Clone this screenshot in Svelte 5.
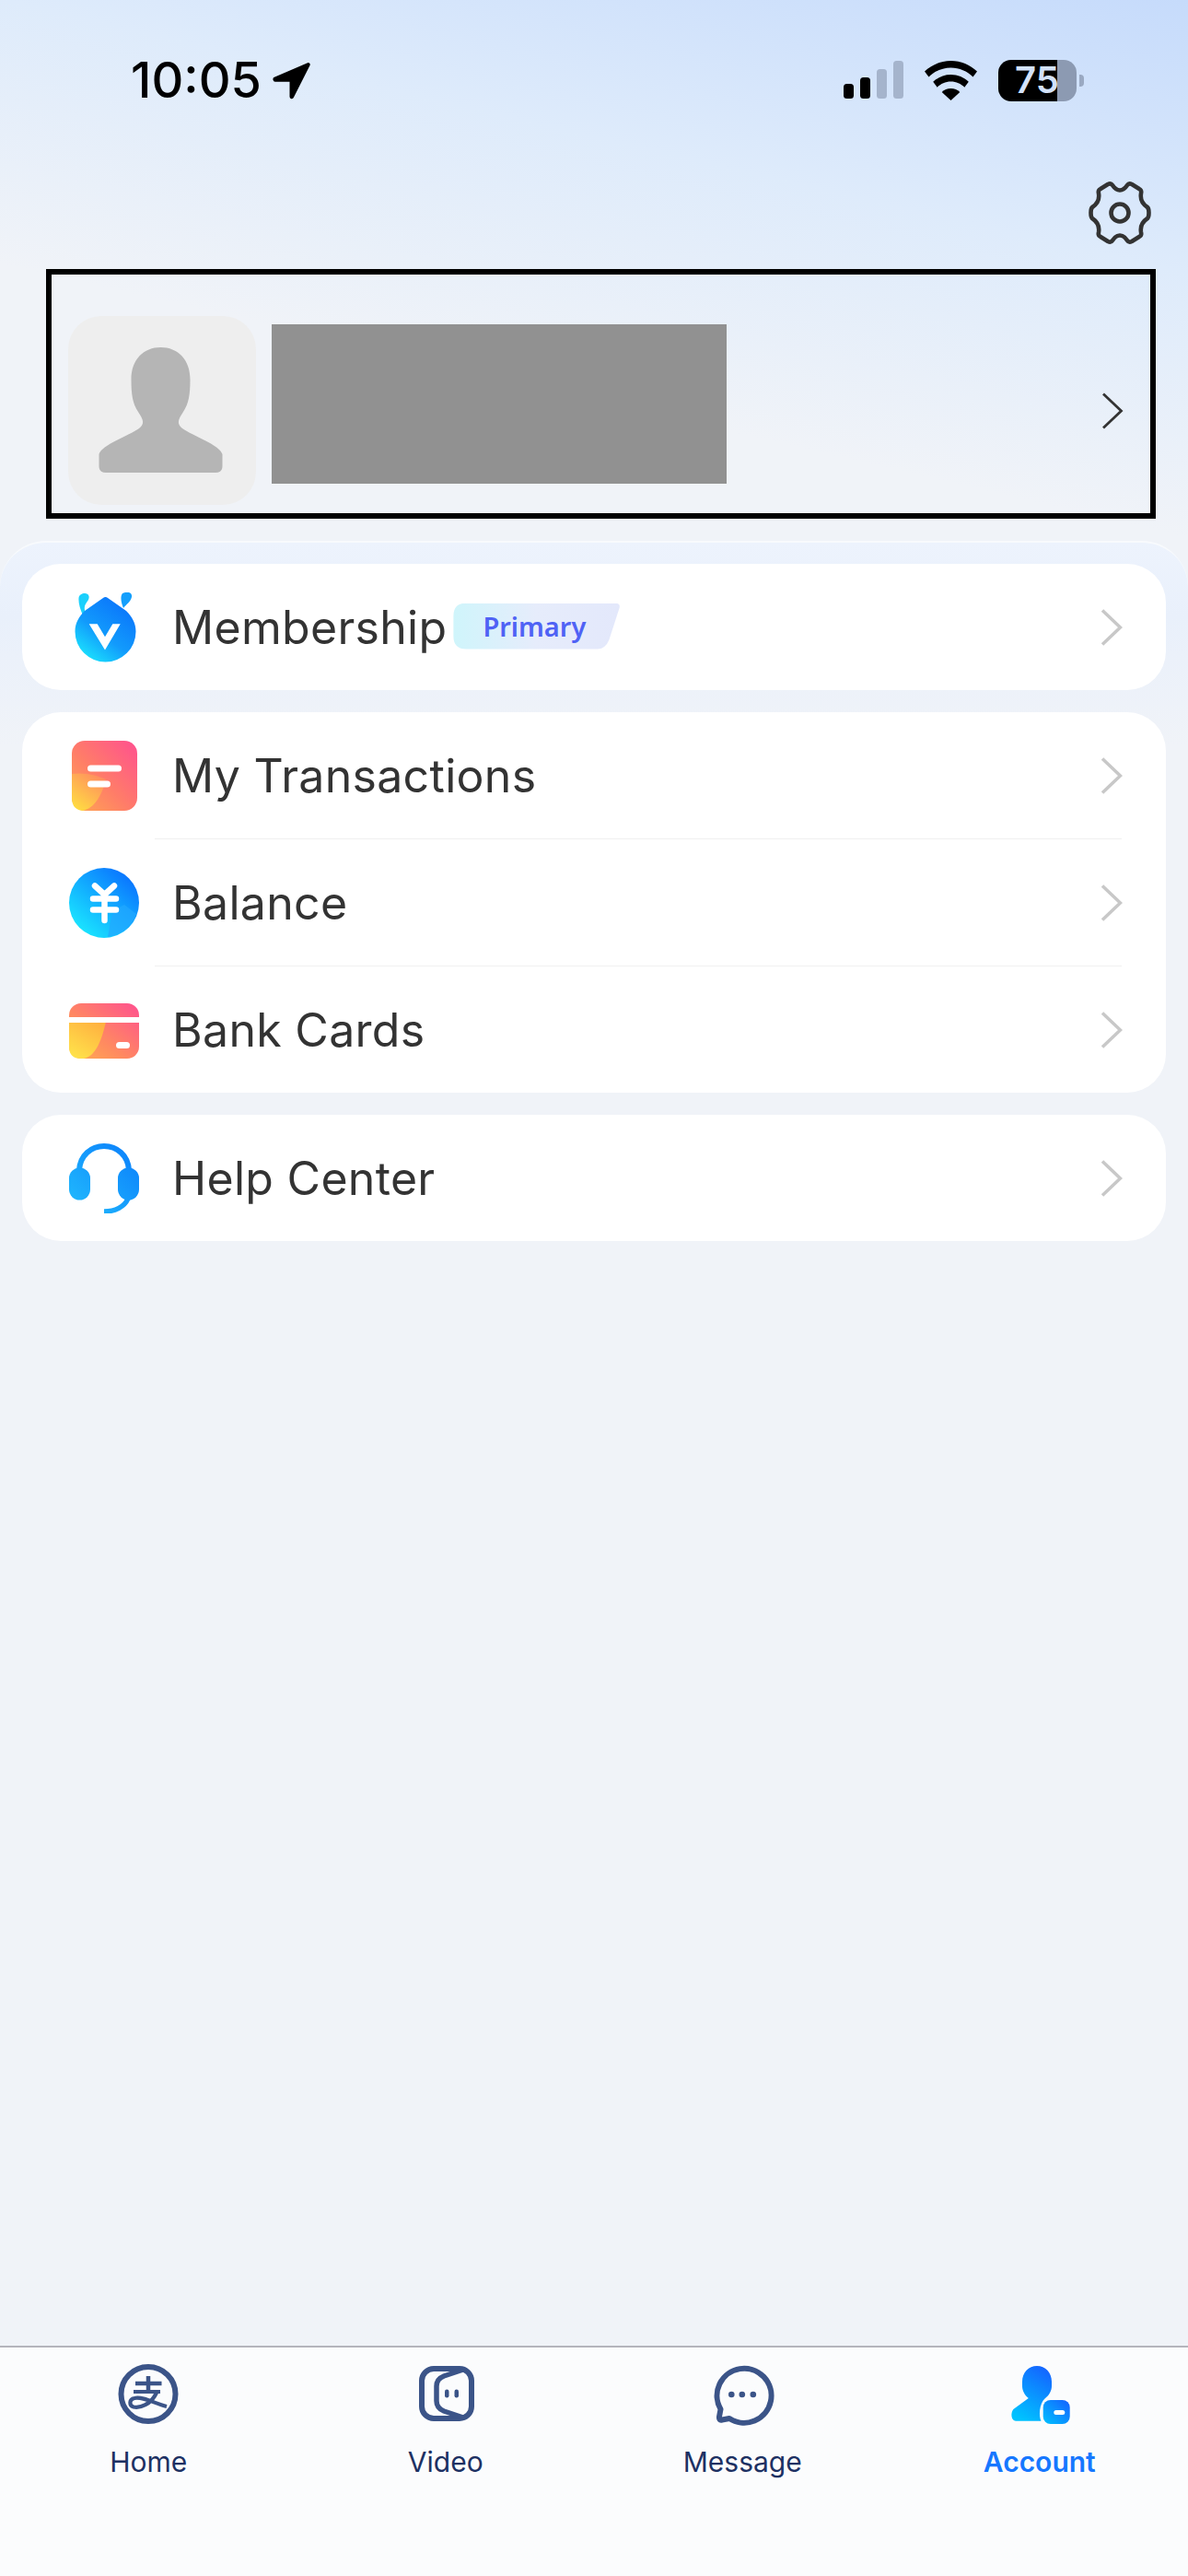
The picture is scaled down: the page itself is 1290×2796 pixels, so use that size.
<script>
  const sections = [
    [{ id: 'member', label: 'Membership', badge: 'Primary' }],
    [
      { id: 'trans', label: 'My Transactions' },
      { id: 'balance', label: 'Balance' },
      { id: 'bank', label: 'Bank Cards' }
    ],
    [{ id: 'help', label: 'Help Center' }]
  ];
  const tabs = [
    { id: 'home', label: 'Home' },
    { id: 'video', label: 'Video' },
    { id: 'message', label: 'Message' },
    { id: 'account', label: 'Account', active: true }
  ];
</script>

<div class="page">
  <div class="status">
    <span class="time">10:05</span>
    <svg class="loc" viewBox="0 0 42 41" width="42" height="41">
      <path d="M38 1.200 2.500 16.500a2.600 2.600 0 0 0 1.200 5.200H18.500V38a2.300 2.300 0 0 0 4.400 .8L40.500 4a2 2 0 0 0-2.500-2.800Z" fill="#000"/>
    </svg>
    <div class="status-right">
      <svg viewBox="0 0 65 42" width="65" height="42">
        <rect x="0" y="25" width="11" height="16" rx="3.500" fill="#000"/>
        <rect x="18" y="18" width="11" height="23" rx="3.500" fill="#000"/>
        <rect x="36" y="9" width="11" height="32" rx="3.500" fill="#a5b4cc"/>
        <rect x="54" y="0" width="11" height="41" rx="3.500" fill="#a5b4cc"/>
      </svg>
      <svg class="wifi" viewBox="0 0 57 43" width="57" height="43">
        <path d="M28.500 0C17.500 0 7.700 4.300 0 11.500l4.500 6C10.800 11.300 19.200 7.500 28.500 7.500s17.700 3.800 24 10l4.500-6C49.300 4.300 39.500 0 28.500 0Z" fill="#000"/>
        <path d="M28.500 15c-7.500 0-14.300 3-19.300 7.800l4.500 6c3.800-3.800 9-6.200 14.800-6.200s11 2.400 14.800 6.200l4.500-6C42.800 18 36 15 28.500 15Z" fill="#000"/>
        <path d="M28.500 30c-3.800 0-7.300 1.500-9.800 4l9.800 9 9.800-9c-2.500-2.500-6-4-9.800-4Z" fill="#000"/>
      </svg>
      <div class="battery"><span>75</span></div>
      <div class="nub"></div>
    </div>
  </div>

  <div class="gear-row">
    <svg viewBox="0 0 70 70" width="70" height="70" fill="none" stroke="#333" stroke-width="4.600" stroke-linejoin="round">
      <path d="M35 10.500C39 10.500 41 8 43 5C44 3.500 46 3 48 4L56 9C58 10 58.500 12 58 14C57 20 59 25 65 29C67 31 67 39 65 41C59 45 57 50 58 56C58.500 58 58 60 56 61L48 66C46 67 44 66.500 43 65C41 62 39 59.500 35 59.500C31 59.500 29 62 27 65C26 66.500 24 67 22 66L14 61C12 60 11.500 58 12 56C13 50 11 45 5 41C3 39 3 31 5 29C11 25 13 20 12 14C11.500 12 12 10 14 9L22 4C24 3 26 3.500 27 5C29 8 31 10.500 35 10.500Z"/>
      <circle cx="35" cy="35" r="9.500"/>
    </svg>
  </div>

  <div class="profile">
    <div class="avatar">
      <svg viewBox="0 0 204 205" width="204" height="205">
        <path d="M100.500 34C119 34 132.500 47 132.500 69C132.500 85 131 95 125 104C120 112 117 116 124 122C135 130 165 140 167.500 150L167.500 163Q167.500 170 160 170L41 170Q33.500 170 33.500 163L33.500 150C36 140 66 130 77 122C84 116 81 112 76 104C70 95 68.500 85 68.500 69C68.500 47 82 34 100.500 34Z" fill="#b5b5b5"/>
      </svg>
    </div>
    <div class="redact"></div>
    <svg class="profile-chev" viewBox="0 0 24 40" width="24" height="40" fill="none" stroke="#333" stroke-width="2.800">
      <path d="M2 1.500 21.500 20 2 38.500"/>
    </svg>
  </div>

  <main class="sheet">
    {#each sections as rows}
      <section class="card">
        {#each rows as row, i}
          {#if i > 0}<div class="divider"></div>{/if}
          <div class="row">
            <svg class="ico" viewBox="0 0 76 76" width="76" height="76">
              {#if row.id === 'member'}
                <defs>
                  <linearGradient id="gm" x1="0.85" y1="0.1" x2="0.25" y2="0.95"><stop offset="0" stop-color="#0a74fb"/><stop offset="0.6" stop-color="#129bfc"/><stop offset="1" stop-color="#1adcfd"/></linearGradient>
                </defs>
                <path d="M10.500 6C11 1 20 -1 21.500 4C22.500 8 18 11 17 15C16.500 18 17 20 17.500 22L15 25C12 18 10 12 10.500 6Z" fill="#1bd0fc"/>
                <path d="M58 1C62 -1 69 -1 68 5C67 10 62 13 59 17C57 12 55 5 58 1Z" fill="#149ffc"/>
                <path d="M37 6Q39.500 4 42 6L62 20C68 26 72.500 33 72.500 42.500A33 33 0 0 1 6.500 42.500C6.500 33 11 26 17 20Z" fill="url(#gm)"/>
                <path d="M21.700 34.200H30.700L39 48.200 47.300 34.200H55.700L39 62.500Z" fill="#fff"/>
              {:else if row.id === 'trans'}
                <defs>
                  <linearGradient id="gt" x1="1" y1="0" x2="0" y2="1"><stop offset="0" stop-color="#ff5090"/><stop offset="0.55" stop-color="#ff7d68"/><stop offset="1" stop-color="#ffa950"/></linearGradient>
                  <linearGradient id="gty" x1="0.8" y1="0" x2="0.1" y2="1"><stop offset="0" stop-color="#ff8a60"/><stop offset="1" stop-color="#ffe040"/></linearGradient>
                </defs>
                <rect x="3" y="0" width="71" height="76" rx="14" fill="url(#gt)"/>
                <path d="M3 36C18 34 32 38 40 42C36 58 28 74 14 76H17Q3 76 3 62Z" fill="url(#gty)"/>
                <rect x="20" y="26.500" width="37" height="7" rx="3.500" fill="#fff"/>
                <rect x="20" y="43.500" width="25" height="7" rx="3.500" fill="#fff"/>
              {:else if row.id === 'balance'}
                <defs>
                  <linearGradient id="gb" x1="0.85" y1="0.1" x2="0.15" y2="0.9"><stop offset="0" stop-color="#0a74ff"/><stop offset="1" stop-color="#1ae6ff"/></linearGradient>
                </defs>
                <circle cx="38" cy="38" r="38" fill="url(#gb)"/>
                <path d="M42 75C46 60 42 48 60 40L73 50C68 64 56 73 42 75Z" fill="#22a8ff" opacity="0.7"/>
                <path d="M28 19.500 38.500 29 49 19.500M26 33.500H51M26 45.500H51M38.500 29V57" fill="none" stroke="#fff" stroke-width="6.500" stroke-linecap="round"/>
              {:else if row.id === 'bank'}
                <defs>
                  <linearGradient id="gc" x1="1" y1="0" x2="0" y2="1"><stop offset="0" stop-color="#ff5090"/><stop offset="0.6" stop-color="#ff8a60"/><stop offset="1" stop-color="#ffb050"/></linearGradient>
                  <linearGradient id="gcy" x1="0.8" y1="0" x2="0.2" y2="1"><stop offset="0" stop-color="#ffb040"/><stop offset="1" stop-color="#ffe24a"/></linearGradient>
                </defs>
                <rect x="0" y="9" width="76" height="60" rx="13" fill="url(#gc)"/>
                <path d="M0 29H40C36 46 30 66 16 69H13Q0 69 0 56Z" fill="url(#gcy)"/>
                <rect x="0" y="24" width="76" height="6" fill="#fff"/>
                <rect x="51" y="51" width="15" height="7" rx="3.500" fill="#fff"/>
              {:else}
                <defs>
                  <linearGradient id="gh2" gradientUnits="userSpaceOnUse" x1="76" y1="0" x2="0" y2="76"><stop offset="0" stop-color="#0a7cfb"/><stop offset="1" stop-color="#22bdfd"/></linearGradient>
                </defs>
                <path d="M11 29C12 13 24 3 38 3S64 13 65 29" fill="none" stroke="url(#gh2)" stroke-width="6"/>
                <rect x="0" y="26.500" width="23" height="35" rx="11.500" fill="url(#gh2)"/>
                <rect x="53" y="26.500" width="23" height="35" rx="11.500" fill="url(#gh2)"/>
                <path d="M64 60C60 69 50 74 38 74" fill="none" stroke="url(#gh2)" stroke-width="5.500"/>
              {/if}
            </svg>
            <span class="row-label">{row.label}</span>
            {#if row.badge}<span class="badge">{row.badge}</span>{/if}
            <svg class="chev" viewBox="0 0 24 40" width="24" height="40" fill="none" stroke="#c8c8c8" stroke-width="3.600">
              <path d="M2 1.500 21.500 20 2 38.500"/>
            </svg>
          </div>
        {/each}
      </section>
    {/each}
  </main>

  <nav class="tabbar">
    {#each tabs as tab}
      <div class="tab" class:active={tab.active}>
        <svg viewBox="0 0 70 70" width="70" height="70" fill="none" stroke="#3b5488" stroke-width="6">
          {#if tab.id === 'home'}
            <circle cx="35" cy="35.500" r="29.500"/>
            <path d="M35 16V34M21 24H49.500" stroke-width="4.500"/>
            <path d="M48 33H19M44 34C38 47 26 51 19 49.500C14 48 14 41 20 40C30 38 42 46 55 49" stroke-width="4.200"/>
          {:else if tab.id === 'video'}
            <rect x="9" y="8" width="54" height="54" rx="13"/>
            <path d="M54 9 33 16C28 18 25 22 25 27V43C25 48 28 52 33 54L54 61" stroke-width="5.500"/>
            <rect x="34" y="30.500" width="4.500" height="9" rx="2.200" fill="#3b5488" stroke="none"/>
            <rect x="44.500" y="30.500" width="4.500" height="9" rx="2.200" fill="#3b5488" stroke="none"/>
          {:else if tab.id === 'message'}
            <path d="M21 62A29.500 29.500 0 1 0 11.500 52L10 60Q9.500 64.500 13 63.500Z" stroke-linejoin="round"/>
            <circle cx="23.300" cy="36" r="3.300" fill="#3b5488" stroke="none"/>
            <circle cx="34.800" cy="36" r="3.300" fill="#3b5488" stroke="none"/>
            <circle cx="46.800" cy="36" r="3.300" fill="#3b5488" stroke="none"/>
          {:else}
            <defs>
              <linearGradient id="ga" gradientUnits="userSpaceOnUse" x1="48" y1="8" x2="14" y2="62"><stop offset="0" stop-color="#1560ff"/><stop offset="1" stop-color="#00c2ff"/></linearGradient>
              <linearGradient id="ga2" x1="1" y1="0" x2="0" y2="1"><stop offset="0" stop-color="#1560ff"/><stop offset="1" stop-color="#00c2ff"/></linearGradient>
            </defs>
            <path d="M32 5C23 5 16 12 16 22V27C16 32 19 37 22.800 40L6.400 52C3 56 4 64.700 9 64.700H36.500C34 60 34 46 41 40C45 37 48 32 48 27V22C48 12 41 5 32 5Z" fill="url(#ga)" stroke="none"/>
            <rect x="38.700" y="42" width="29" height="26" rx="8" fill="url(#ga2)" stroke="none"/>
            <rect x="50.300" y="53" width="12" height="5" rx="2.500" fill="#fff" stroke="none"/>
          {/if}
        </svg>
        <span>{tab.label}</span>
      </div>
    {/each}
  </nav>
</div>

<style>
  :global(body) { margin: 0; }
  .page {
    width: 1290px;
    height: 2796px;
    display: flex;
    flex-direction: column;
    font-family: Inter, "Liberation Sans", sans-serif;
    background-color: #f0f3f8;
    background-image: linear-gradient(193deg, #c6dbfb 0%, #deebfb 33%, #f0f3f8 65%);
    background-size: 100% 600px;
    background-repeat: no-repeat;
  }
  .status {
    display: flex;
    align-items: center;
    height: 46px;
    padding: 64px 113px 0 142px;
  }
  .time {
    font-size: 54px;
    font-weight: 500;
    line-height: 46px;
    color: #000;
  }
  .loc { margin-left: 12px; }
  .status-right {
    margin-left: auto;
    display: flex;
    align-items: center;
  }
  .wifi { margin-left: 23px; }
  .battery {
    width: 85px;
    height: 45px;
    margin-left: 23px;
    border-radius: 14px;
    background: linear-gradient(90deg, #000 75%, #8c9ab2 75%);
    display: flex;
    align-items: center;
    box-sizing: border-box;
    padding-left: 18px;
  }
  .battery span {
    font-size: 40px;
    font-weight: 600;
    line-height: 1;
    color: #d3e2fa;
  }
  .nub {
    width: 5px;
    height: 13px;
    margin-left: 3px;
    border-radius: 0 4px 4px 0;
    background: #9aa9c2;
  }
  .gear-row {
    display: flex;
    justify-content: flex-end;
    padding: 86px 39px 0 0;
    height: 70px;
  }
  .profile {
    box-sizing: border-box;
    width: 1205px;
    height: 271px;
    margin: 26px 0 0 50px;
    border: 6px solid #000;
    display: flex;
    align-items: flex-start;
    padding: 45px 0 0 18px;
  }
  .avatar {
    width: 204px;
    height: 205px;
    background: #eee;
    border-radius: 36px;
    flex: none;
  }
  .avatar svg { display: block; }
  .redact {
    width: 494px;
    height: 173px;
    margin: 9px 0 0 17px;
    background: #919191;
  }
  .profile-chev { margin: 83px 29px 0 auto; }
  .sheet {
    flex: 1;
    margin-top: 24px;
    box-sizing: border-box;
    padding: 23px 24px 0;
    border-top: 2px solid #f8fafd;
    border-radius: 50px 50px 0 0;
    background: linear-gradient(180deg, #edf3fd 0, #e9f0fb 80px, #f0f3f8 220px);
    display: flex;
    flex-direction: column;
    gap: 24px;
  }
  .card {
    background: #fff;
    border-radius: 42px;
  }
  .row {
    height: 137px;
    display: flex;
    align-items: center;
    padding: 0 47px 0 51px;
  }
  .ico { flex: none; }
  .row-label {
    margin-left: 36px;
    font-size: 50px;
    letter-spacing: 0.3px;
    color: #333;
  }
  .badge {
    width: 181px;
    height: 50px;
    margin-left: 7px;
    margin-top: -2px;
    box-sizing: border-box;
    padding-left: 32px;
    display: flex;
    align-items: center;
    font-family: "Noto Sans", sans-serif;
    font-size: 29px;
    font-weight: 600;
    color: #4f62f5;
    background: linear-gradient(90deg, #cff5fb 0%, #e6ecfb 50%, #e3e8fb 100%);
    clip-path: path("M14 0H175Q182 0 180 6L169 40Q165 50 156 50H14Q0 50 0 36V14Q0 0 14 0Z");
  }
  .chev { margin-left: auto; flex: none; }
  .divider {
    height: 1px;
    margin: 0 48px 0 144px;
    background: #f0f0f0;
  }
  .tabbar {
    box-sizing: border-box;
    height: 250px;
    border-top: 2px solid #b4b4bc;
    background: #fbfcfd;
    display: grid;
    grid-template-columns: repeat(4, 1fr);
    padding-top: 15px;
  }
  .tab {
    display: flex;
    flex-direction: column;
    align-items: center;
    color: #1d3163;
    font-size: 30px;
    line-height: 36px;
  }
  .tab span { margin-top: 21px; }
  .tab.active { color: #1677ff; font-weight: 600; }
</style>
